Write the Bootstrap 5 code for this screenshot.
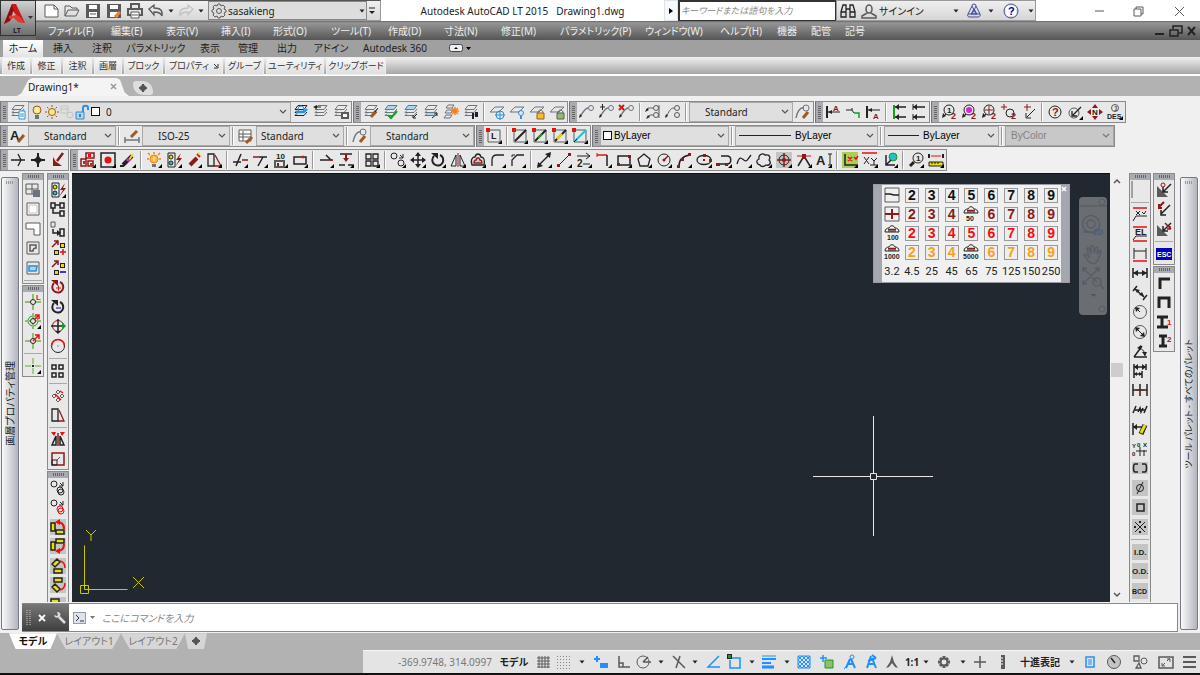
<!DOCTYPE html>
<html lang="ja">
<head>
<meta charset="utf-8">
<meta name="viewport" content="width=device-width, initial-scale=1">
<title>Autodesk AutoCAD LT 2015</title>
<link href="https://cdn.jsdelivr.net/npm/bootstrap@5.3.0/dist/css/bootstrap.min.css" rel="stylesheet">
<style>
:root { --bar: #e8e8e8; --face: #f0f0f0; --edge: #8a8a8a; --canvas: #212830; }
body { font: 10px/16px "Noto Sans", "Noto Sans CJK JP", sans-serif; font-feature-settings: "palt"; color: #222; background: var(--face); }
button, select, input { font: inherit; font-feature-settings: inherit; color: inherit; border: 0; background: none; padding: 0; border-radius: 0; min-width: 0; }
a { color: inherit; text-decoration: none; }
svg { display: block; flex: none; }
select { appearance: none; outline: 0; }
input:focus { outline: 0; }
button { display: flex; align-items: center; justify-content: center; white-space: nowrap; }
.flat { display: contents; }
.fit { min-width: 0; min-height: 0; }

/* title and menus */
.app-head { display: grid; grid-template-columns: 36px 1fr; background: #6a6a6a; }
.app-btn { height: 36px; background: linear-gradient(#d0d0d0, #6f6f6f); border: 1px solid #333; position: relative; align-items: flex-start; justify-content: flex-start; }
.app-btn small { position: absolute; left: 12px; bottom: -1px; font-size: 7px; line-height: 11px; font-weight: 700; }
.title-row { height: 21px; background: #fff; }
.qat { width: 345px; background: linear-gradient(#efefef, #d8d8d8); border: 1px solid #999; border-top-color: #555; border-left: 0; padding-left: 4px; }
.qat .ib { width: 21px; }
.qat .ic { width: 9px; }
.qat .ic .ib, .workspace .ic .ib { width: 9px; }
.workspace { width: 159px; background: #ddd; border: 1px solid #888; height: 19px; margin-left: 3px; }
.workspace > span:first-child .ib { width: 19px; }
.find { width: 158px; border: 2px solid #333; border-width: 2px 1px 1px 2px; background: #fff; padding: 0 1px; font-size: 9px; }
.find::placeholder, .cmd-input::placeholder { color: #888; font-style: italic; opacity: 1; }
.info { width: 200px; background: linear-gradient(#efefef, #d6d6d6); border: 1px solid #999; display: grid; grid-template-columns: 22px 20px 72px 10px 26px 8px 32px 8px; align-items: center; }
.info .ib { width: 100%; }
.win { display: grid; grid-template-columns: 41px 38px 44px; padding-left: 42px; width: 164px; }
.menu-row { height: 19px; background: linear-gradient(#6a6a6a, #959595 10%, #555); color: #eee; display: grid; align-items: center; padding-left: 12px; white-space: nowrap;
  grid-template-columns: 63px 55px 55px 52px 58px 57px 56px 57px 59px 85px 75px 57px 34px 34px 1fr; }

/* ribbon */
.tab-row { height: 17px; background: #a0a0a0; padding-left: 3px; display: grid; grid-template-columns: 40px 40px 38px 70px 38px 38px 40px 48px 80px 50px; }
.tab-row .on { background: linear-gradient(#fff, #e4e4e4); }
.panel-row { height: 19px; background: linear-gradient(#f0f0f0, #a6a6a6); border-bottom: 2px solid #fff; padding-left: 2px; display: grid; gap: 2px; font-size: 9px;
  grid-template-columns: 28px 29px 29px 28px 39px 58px 39px 58px 60px; }
.panel-row button { background: linear-gradient(#f8f8f8, #dedede); border: 1px solid #eee; color: #333; }
.file-row { height: 21px; background: #b2b2b2; padding: 2px 0 0 17px; }
.file-tab { width: 112px; background: #f4f4f4; clip-path: polygon(0 100%, 4% 85%, 10% 15%, 14% 0, 88% 0, 92% 12%, 96% 80%, 100% 100%); padding: 0 12px 0 11px; }
.new-tab { width: 20px; height: 14px; background: #ddd; border-radius: 3px 10px 3px 10px; margin-top: 3px; }

/* toolbars */
.bars { padding: 5px 0 2px; gap: 2px; }
.bar-row { display: flex; gap: 1px; }
.bar { height: 22px; background: var(--bar); border: 1px solid var(--edge); border-left-color: #777; flex: none; }
.grip { width: 7px; flex: none; background: repeating-linear-gradient(#a9abb3 0 1px, transparent 1px 2px) center / 3px 14px no-repeat, linear-gradient(#666 0 0) center / 3px 14px no-repeat, #a9abb3; }
.tool { width: 20px; height: 20px; flex: none; }
.sep { width: 6px; flex: none; margin: 1px 0; background: linear-gradient(90deg, transparent 2px, #999 2px 3px, #fff 3px 4px, transparent 4px); }
.combo { background-color: #dfdfdf; border: 1px solid #a9a9a9; height: 20px; }
.combo select { background: url("data:image/svg+xml,%3Csvg xmlns='http://www.w3.org/2000/svg' width='8' height='6'%3E%3Cpath d='M1 1l3 3 3-3' fill='none' stroke='%23555' stroke-width='1.2'/%3E%3C/svg%3E") no-repeat right 3px center; flex: 1; height: 18px; }
.combo .ib { width: 15px; }
.w1 { width: 263px; } .w2 { width: 104px; } .w3 { width: 88px; } .w4 { width: 129px; } .w5 { width: 143px; } .w6 { width: 115px; } .w7 { width: 109px; }
.w2 select, .w3 select { padding-left: 15px; }
.lay { font: 10px/16px "Liberation Sans", sans-serif; color: #000; }
.swatch { width: 9px; height: 9px; border: 1px solid #111; background: #fff; margin: 0 2px 0 2px; }
.rule-line { height: 1px; background: #222; margin-left: 3px; }
.w5 .rule-line { width: 52px; margin-right: 4px; } .w6 .rule-line { width: 31px; margin-right: 4px; }
.off { background: #c8c8c8; } .off select { opacity: .7; padding-left: 5px; color: #666; }

/* work area */
.side { width: 18px; margin: 4px 3px 3px 1px; border: 1px solid #777a84; border-radius: 2px; background: repeating-linear-gradient(90deg, #999 0 1px, transparent 1px 2px) center 3px / 8px 3px no-repeat, linear-gradient(90deg, #fafafa, #b2b5be); box-shadow: 1px 0 0 #fff; }
.side-r { margin: 4px 2px 3px; font-size: 9px; }
.side span { writing-mode: vertical-rl; text-orientation: sideways; transform: rotate(180deg); white-space: nowrap; }
.gap-a { margin-right: 3px; }
.gap-b { margin-left: 5px; margin-right: 2px; }
.vbar { width: 22px; background: var(--bar); border: 1px solid var(--edge); margin-bottom: 1px; flex: none; }
.vbar.open { border-bottom: 0; margin: 0; flex: 1; overflow: hidden; min-height: 0; }
.vbar .grip { width: auto; height: 6px; background: repeating-linear-gradient(90deg, #a9abb3 0 1px, transparent 1px 2px) center / 12px 3px no-repeat, linear-gradient(#666 0 0) center / 12px 3px no-repeat, #a9abb3; }
.vbar .tool { height: 19px; }
.vbar .tool:nth-child(odd) { height: 20px; }
.vbar .sep { width: auto; height: 5px; margin: 0 1px; background: linear-gradient(transparent 2px, #aaa 2px 3px, transparent 3px); }
.canvas { background: var(--canvas); flex: 1; position: relative; border-top: 1px solid #111; }
.ucs { position: absolute; left: 8px; bottom: 7px; }
.cross { position: absolute; right: 177px; bottom: 66px; }
.scroller { width: 14px; padding: 5px 1px 4px; }
.above { flex: 177; } .below { flex: 212; }
.thumb { height: 14px; background: #cdcdcd; }
.pal { position: absolute; top: 10px; right: 40px; width: 197px; background: var(--face); border: 1px solid #9a9ca5; }
.pal .edge { width: 8px; background: #a4a7b0; }
.pal-grid { flex: 1; display: grid; padding-top: 1px; grid-template-columns: repeat(9, minmax(0, 1fr)); }
.pal-grid button { height: 19px; }
.num { border: 1px solid #999; width: 14px; height: 15px; font: 700 14px/13px "Liberation Sans", sans-serif; text-align: center; background: #eee; }
.pal-grid .size { font: 11px/20px Roboto, sans-serif; height: 20px; }
.c0 { color: #111; } .c1 { color: #8b1a1a; } .c2 { color: #f01010; } .c3 { color: #f7a11a; }
.navpal { position: absolute; right: 3px; top: 23px; width: 28px; height: 118px; border-radius: 4px; background: #6a6d72; }

/* command line and status */
.cmd { height: 30px; background: #fff; border: 1px solid #888; border-left: 0; margin: 1px 0; }
.cmd-grip { width: 47px; background: linear-gradient(#777, #3f3f3f); padding-left: 4px; gap: 6px; }
.cmd-input { flex: 1; padding-left: 5px; }
.layout-row { height: 17px; background: #b2b2b2; padding-left: 9px; }
.layout-row button { height: 16px; background: #d6d6d6; color: #777; width: 64px; clip-path: polygon(0 0, 100% 0, 92% 60%, 86% 100%, 14% 100%, 8% 60%); }
.layout-row .on { width: 48px; background: #fff; color: #111; font-weight: 700; }
.layout-row .plus { width: 22px; }
.status-wrap { background: #b2b2b2; border-bottom: 2px solid #111; height: 26px; }
.status { background: #e4e4e4; border-top: 1px solid #f5f5f5; display: grid; align-items: center;
  grid-template-columns: 133px 36px 21px 20px 17px 22px 23px 18px 16px 19px 14px 22px 21px 13px 22px 13px 22px 23px 23px 20px 22px 18px 10px 26px 12px 22px 24px 50px 14px 22px 26px 26px 25px 22px; }
.coords { color: #777; text-align: right; padding-right: 4px; }
</style>
</head>
<body class="vh-100 d-flex flex-column overflow-hidden">

<header class="app-head">
  <button class="app-btn" type="button" aria-label="アプリケーション"><svg width="34" height="26" viewBox="0 0 34 26"><path d="M11 3l4 0 9 19-6-1-6-5-3 3-6 4z" fill="#c81a1c"/><path d="M11 3L3 23l6-3 4-9z" fill="#8f0d10"/><path d="M8 15l6-2 5 3 5 6-7-1-4-4-5 1z" fill="#e23a34"/><path d="M12 10l3 4-4 1z" fill="#c9b0b0"/><path d="M27 15h5l-2.500 3z" fill="#333"/></svg><small>LT</small></button>
  <div>
    <div class="title-row d-flex">
      <div class="qat d-flex align-items-center">
        <span class="d-flex" data-icons="qnew qopen qsave qsaveas qprint qundo"></span>
        <span class="ic" data-icons="caret"></span><span class="d-flex" data-icons="qredo"></span><span class="ic" data-icons="caret"></span>
        <label class="workspace d-flex align-items-center"><span data-icons="gear"></span><select class="flex-fill" aria-label="ワークスペース"><option>sasakieng</option></select><span class="ic" data-icons="caret"></span></label>
        <span class="ic" data-icons="drop"></span>
      </div>
      <div class="flex-fill d-flex align-items-center justify-content-center gap-2"><span>Autodesk AutoCAD LT 2015</span><span>Drawing1.dwg</span></div>
      <button type="button" class="bg-secondary-subtle border px-1" aria-label="展開"><svg width="4" height="6"><path d="M0 0v6l4-3z"/></svg></button>
      <input class="find" type="text" placeholder="キーワードまたは語句を入力" aria-label="検索">
      <div class="info">
        <span data-icons="binoc"></span><span data-icons="user"></span><a href="#">サインイン</a><span data-icons="caret"></span><span data-icons="a360"></span><span data-icons="caret"></span><span data-icons="help"></span><span data-icons="caret"></span>
      </div>
      <div class="win" data-icons="wmin wmax wclose"></div>
    </div>
    <nav class="menu-row">
      <a href="#">ファイル(F)</a><a href="#">編集(E)</a><a href="#">表示(V)</a><a href="#">挿入(I)</a><a href="#">形式(O)</a><a href="#">ツール(T)</a><a href="#">作成(D)</a><a href="#">寸法(N)</a><a href="#">修正(M)</a><a href="#">パラメトリック(P)</a><a href="#">ウィンドウ(W)</a><a href="#">ヘルプ(H)</a><a href="#">機器</a><a href="#">配管</a>
      <div class="d-flex justify-content-between align-items-center"><a href="#">記号</a><span class="d-flex" data-icons="dmin dmax dclose"></span></div>
    </nav>
  </div>
</header>
<div class="tab-row">
  <button type="button" class="on">ホーム</button><button type="button">挿入</button><button type="button">注釈</button><button type="button">パラメトリック</button><button type="button">表示</button><button type="button">管理</button><button type="button">出力</button><button type="button">アドイン</button><button type="button">Autodesk 360</button>
  <button type="button" aria-label="リボンを最小化"><svg width="22" height="10"><rect x=".5" y="1.500" width="13" height="7" rx="2" fill="#eee" stroke="#445"/><path d="M5 6l2-2 2 2zM17 4h5l-2.500 3z"/></svg></button>
</div>
<div class="panel-row">
  <button type="button">作成</button><button type="button">修正</button><button type="button">注釈</button><button type="button">画層</button><button type="button">ブロック</button><button type="button" class="gap-1">プロパティ<svg width="6" height="6"><path d="M1 1l3 3M5 1v4H1" fill="none" stroke="#333"/></svg></button><button type="button">グループ</button><button type="button">ユーティリティ</button><button type="button">クリップボード</button>
</div>
<div class="file-row d-flex">
  <div class="file-tab d-flex align-items-center justify-content-between"><a href="#">Drawing1*</a><svg width="7" height="7"><path d="M1 1l5 5M6 1L1 6" stroke="#999" stroke-width="1.500"/></svg></div>
  <button type="button" class="new-tab ms-1" aria-label="新規タブ"><svg width="8" height="8"><circle cx="4" cy="4" r="3" fill="#555"/><path d="M4 0v8M0 4h8" stroke="#555" stroke-width="2"/></svg></button>
</div>

<div class="bars d-flex flex-column">
  <div class="bar-row">
    <div class="bar d-flex"><i class="grip"></i><span class="d-flex" data-tools="layprop"></span>
      <label class="combo w1 d-flex align-items-center"><span class="d-flex" data-icons="bulb sun vpf lock"></span><i class="swatch"></i><select class="ps-1" aria-label="画層"><option>0</option></select></label>
      <span class="d-flex" data-tools="laycur layprev laystate"></span></div>
    <div class="bar d-flex"><i class="grip"></i><span class="d-flex" data-tools="laymatch laycheck layiso layuniso layfrz laywalk | lay0frz lay0off lay0lock lay0unlock"></span></div>
    <div class="bar d-flex"><i class="grip"></i><span class="d-flex" data-tools="mlead mladd mlrem | mlalign mlcol |"></span>
      <label class="combo w2 d-flex"><select aria-label="マルチ引出線スタイル"><option>Standard</option></select></label><span class="d-flex" data-tools="mlstyle"></span></div>
    <div class="bar d-flex"><i class="grip"></i><span class="d-flex" data-tools="dimA dimB dimC | dimD dimE"></span></div>
    <div class="bar d-flex"><i class="grip"></i><span class="d-flex" data-tools="bal1 bal2 bal3 bal4 bal5 | qmark check. north des."></span></div>
  </div>
  <div class="bar-row">
    <div class="bar d-flex"><i class="grip"></i><span class="d-flex" data-tools="txtstyle"></span><label class="combo w3 d-flex"><select aria-label="文字スタイル"><option>Standard</option></select></label>
      <span class="d-flex" data-tools="| dimstyle"></span><label class="combo w3 d-flex"><select aria-label="寸法スタイル"><option>ISO-25</option></select></label>
      <span class="d-flex" data-tools="| tabstyle"></span><label class="combo w3 d-flex"><select class="ps-1" aria-label="表スタイル"><option>Standard</option></select></label>
      <span class="d-flex" data-tools="| mlstyle"></span><label class="combo w2 d-flex"><select aria-label="引出線スタイル"><option>Standard</option></select></label></div>
    <div class="bar d-flex"><i class="grip"></i><span class="d-flex" data-tools="boxL. | boxK. boxG. boxY. boxC."></span></div>
    <div class="bar d-flex lay"><i class="grip"></i><label class="combo w4 d-flex align-items-center"><i class="swatch"></i><select aria-label="色"><option>ByLayer</option></select></label><i class="sep"></i>
      <label class="combo w5 d-flex align-items-center"><i class="rule-line"></i><select aria-label="線種"><option>ByLayer</option></select></label><i class="sep"></i>
      <label class="combo w6 d-flex align-items-center"><i class="rule-line"></i><select aria-label="線の太さ"><option>ByLayer</option></select></label><i class="sep"></i>
      <label class="combo w7 off d-flex"><select disabled aria-label="印刷スタイル"><option>ByColor</option></select></label></div>
  </div>
  <div class="bar-row">
    <div class="bar d-flex"><i class="grip"></i><span class="d-flex" data-tools="arrowR star4 arrowDL"></span></div>
    <div class="bar d-flex"><i class="grip"></i><span class="d-flex" data-tools="blocks. point. eraser. | bulbO. dyn. wand. stretch. | trim. extend. arr10. rect1. | join. brk. | array. | copy. move. rotate. mirror. offset. fillet. chamfer. | xline. line. pline2. pl. rect. polygon. circle. arc. ellipse. earc. spline. cloud. hatch. divide. mtext. | ucs. xref. globe. | zoom1. ruler."></span></div>
  </div>
</div>

<div class="flex-fill fit d-flex">
  <aside class="side d-flex flex-column align-items-center justify-content-center"><span>画層プロパティ管理</span></aside>
  <div class="flex-fill fit d-flex flex-column">
    <main class="d-flex flex-fill fit">
      <div class="d-flex flex-column gap-a">
        <div class="vbar"><i class="grip d-block"></i><span data-tools="vp1 vp2 vp3 vp4 vp5 |"></span></div>
        <div class="vbar"><i class="grip d-block"></i><span data-tools="snapL snapG. snapH | snapP."></span></div>
      </div>
      <div class="d-flex flex-column gap-a">
        <div class="vbar"><i class="grip d-block"></i><span data-tools="dyn. grp1 grp2 adds subs rotR rotK rot4 circR | array4 | diag trap | mirR scl"></span></div>
        <div class="vbar open"><i class="grip d-block"></i><span data-tools="cpK cpR y1 y2 y3 y4 y5"></span></div>
      </div>
      <div class="canvas">
        <svg class="ucs" width="68" height="66" viewBox="0 0 68 66" fill="none" stroke="#c8c800" stroke-width="1"><path d="M.5 56.500h8v8h-8zM4.500 60.500v-44M4.500 60.500h43M6 1l5 5 5-5M11 6v6M53 48l11 11M64 48l-11 11"/></svg>
        <svg class="cross" width="120" height="120" viewBox="0 0 120 120" fill="none" stroke="#e8e8e8"><path d="M60.500 0v57M60.500 64v56M0 60.500h57M64 60.500h56M57.500 57.500h6v6h-6z"/></svg>
        <section class="pal d-flex"><i class="edge"></i><div class="pal-grid" id="palette"></div><i class="edge"><svg width="6" height="8"><path d="M1 2l4 4M5 2L1 6" stroke="#fff" stroke-width="1.500"/></svg></i></section>
        <svg class="navpal" viewBox="0 0 28 118" fill="none" stroke="#555e68" stroke-width="1.300"><path d="M0 9h28" stroke="#5c5f64"/><circle cx="23" cy="5" r="3" stroke-width="1"/><circle cx="23" cy="112" r="3" stroke-width="1"/><circle cx="12" cy="27" r="8.500"/><circle cx="12" cy="27" r="4"/><path d="M4 35h9"/><text x="14" y="38" font-size="8" font-weight="700" fill="#4a6078" stroke="none">2D</text><path d="M10 65l-5-7c1-2 3 0 5 2l-2-9c2-1 3 1 4 6V49c2-1 3 0 3 7l2-6c2 0 2 2 1 7l3-4c2 1 1 3-1 7-2 7-6 8-10 5zM4 71l14 14M20 71L4 87M4 75v-4h4M16 71h4v4M4 83v4h4"/><circle cx="18" cy="85" r="4"/><path d="M21 88l4 4"/><path d="M12 97h5l-2.500 3z" fill="#50555c" stroke="none"/></svg>
      </div>
      <div class="scroller d-flex flex-column"><svg width="12" height="6"><path d="M3 5l3-3 3 3" fill="none" stroke="#555" stroke-width="1.500"/></svg><div class="above"></div><div class="thumb"></div><div class="below"></div><svg width="12" height="6"><path d="M3 1l3 3 3-3" fill="none" stroke="#555" stroke-width="1.500"/></svg></div>
      <div class="d-flex flex-column gap-b">
        <div class="vbar open"><i class="grip d-block"></i><span data-tools="vline | xyR elR dimR dimH dimAl dimRad dimDia dimAng dimBase dimCon dimJog dimEd dimOrd gBr gPhi gBox gX | gID gOD gBCD"></span></div>
      </div>
      <div class="d-flex flex-column gap-a">
        <div class="vbar"><i class="grip d-block"></i><span data-tools="wld1 wld2 wld3 | esc"></span></div>
        <div class="vbar"><i class="grip d-block"></i><span data-tools="stL stC stI1 stI2"></span></div>
      </div>
    </main>
    <div class="cmd d-flex">
      <div class="cmd-grip d-flex align-items-center"><svg width="5" height="16"><path d="M1 0v16M4 0v16" stroke="#ccc" stroke-dasharray="1 1"/></svg><svg width="10" height="10"><path d="M2 2l6 6M8 2L2 8" stroke="#fff" stroke-width="1.800"/></svg><svg width="14" height="14" viewBox="0 0 14 14"><path d="M6 6l6 6" stroke="#ddd" stroke-width="2.500"/><path d="M1 4l3 1 1-1-1-3c3 0 4 2 3 4s-5 3-6-1z" fill="#ddd"/></svg></div>
      <div class="d-flex align-items-center ps-1"><svg width="24" height="12" viewBox="0 0 24 12"><rect x=".5" y=".5" width="12" height="11" fill="#dde3ea" stroke="#99a"/><path d="M3 3l3 3-3 3M7 9h4" fill="none" stroke="#334"/><path d="M17 4h5l-2.500 3z" fill="#777"/></svg></div>
      <input class="cmd-input" type="text" placeholder="ここにコマンドを入力" aria-label="コマンド">
    </div>
  </div>
  <aside class="side side-r d-flex flex-column align-items-center justify-content-center"><span>ツール パレット - すべてのパレット</span></aside>
</div>

<div class="layout-row d-flex"><button type="button" class="on">モデル</button><button type="button">レイアウト1</button><button type="button">レイアウト2</button><button type="button" class="plus" aria-label="新規レイアウト"><svg width="8" height="8"><circle cx="4" cy="4" r="3" fill="#555"/><path d="M4 0v8M0 4h8" stroke="#555" stroke-width="2"/></svg></button></div>
<footer class="status-wrap d-flex justify-content-end"><div class="status">
  <span class="coords">-369.9748, 314.0997</span><button type="button" class="fw-bold">モデル</button>
  <span class="flat" data-icons="sgrid sdots caret sdyn sortho spolar caret siso caret sotrk sosnap caret slw caret stran scyc sann1 sann2 sann3"></span>
  <button type="button" class="fw-bold">1:1</button><span class="flat" data-icons="caret sgear caret splus sruler"></span>
  <button type="button" class="fw-bold">十進表記</button><span class="flat" data-icons="caret sprop sperf siso2 sfull smenu"></span>
</div></footer>

<script>
// Icon strokes on a 16 x 16 grid. Each part is "<colour><width> path"; an upper-case
// colour fills. "o:" and "O:" draw circles, "t:" sets a short label.
const C = {k:'#222',r:'#e81010',m:'#8b1a1a',g:'#1a9a2a',y:'#e8e000',b:'#2f8fd8',s:'#6c757d',w:'#fff',c:'#22c0d0',o:'#f08020',p:'#e020e0',n:'#a05a20',l:'#c4c4c4',d:'#0000b8',e:'#444c9a',a:'#5a5a5a',z:'#1e90ff',u:'#a8cf5a',i:'#a9d4f2',v:'#f0c030',f:'#f8e88a',h:'#8fbf6a'};
const lay = 's M5 1.500h9l-3 4H2zM4 6.500l-2 2h9l3-3.500M4 9.500l-2 2h9l3-3.500';
const lay1 = 's M6 3h9l-5 5H1z';
const brush = 'n3 M8 13l5-6|k M12 8l3-4';
const ml = 'o:s 12 4 2.500|s1.300 M9 4C6 4 4 8 1 13|K M0 14l1-4 2 2z';
const ball = 'o:k 8 6 5|K M1 14l1-5 3 3z|k M2 13l3-3';
const box = 'a M2 2h12v12H2z|R M0 0h4v4H0z';
const sun = 'O:f 8 8 3.500|o:n 8 8 3.500|n M8 1v2M8 13v2M1 8h2M13 8h2M3 3l1.500 1.500M11.500 11.500L13 13M13 3l-1.500 1.500M3 13l1.500-1.500';
const bulb = 'O:f 8 6 4|o:n 8 6 4|S M6 11h4v4H6z|w M8 4v4';
const snap = 'h2 M8 0v5M8 11v5M0 8h5M11 8h5|o:k 8 8 2.500';
const gray = 'L M0 0h16v16H0z';
const rot = 'k2 M4 4a5.500 5.500 0 1 0 6-1|K M1 1h7v6z';
const cloudR = 'O:l 8 8 3|k1.300 M2 13C0 7 3 5 5 5c1-4 5-4 6 0 3 0 4 3 3 8z|m1.300 M4 11c0-3 2-3 2-3 1-3 3-3 4 0 0 0 2 0 2 3z';
const arch = 'k M1 7c0-3 2-4 4-4 1-3 5-3 6 0 2 0 4 1 4 4zM4 6h8|m1.500 M4 4.500h8';
const cp = 'k M10 3l3 3M13 2v4H9|o:k 4 4 3';
const I = {
 caret:'K M5.500 6.500h5l-2.500 3z', drop:'k M5 5h6|K M5 8h6l-3 3z',
 qnew:'W M2 2h9l4 4v8H2z|a M2 2h9l4 4v8H2zM11 2v4h4', qopen:'a M1 13V3h5l2 2h5v2M1 13l3-6h11l-3 6z', qsave:'A M1 1h14v14H1z|W M4 2h8v4H4zM4 9h8v5H4z|a M5 11h6', qsaveas:'A M1 1h14v14H1z|W M4 2h8v4H4zM4 9h8v5H4z|o3 M9 14l5-5',
 qprint:'a2 M4 5V1h8v4M1 6h14v6H1z|W M4 9h8v6H4z|a M4 9h8v6H4zM5 12h6', qundo:'a1.300 M1 6l5-4v3c6 0 9 2 8 8-1-3-3-4-8-4v3z', qredo:'l1.300 M15 6l-5-4v3c-6 0-9 2-8 8 1-3 3-4 8-4v3z',
 gear:'o:a 8 8 2.500|a M7 1h2l1 2 2-1 2 2-1 2 2 1v2l-2 1 1 2-2 2-2-1-1 2H7l-1-2-2 1-2-2 1-2-2-1V7l2-1-1-2 2-2 2 1z',
 binoc:'k1.300 M1 9l2-7h3v12H1zM15 9l-2-7h-3v12h5zM6 6h4M1 9h5M10 9h5', user:'a1.500 M5 6a3 4 0 1 1 6 0c0 3-1 4-3 4S5 9 5 6zM6 10l-5 3v2h14v-2l-5-3', a360:'e M6 3a2 2 0 1 1 4 0l4 8c1 2-1 3-2 3H4c-2 0-3-1-2-3zM8 6l3 5H5zM6 3l4 8M10 3L6 11M2 11h12', help:'W M3 3h10v10H3z|o:e 8 8 7|t:d 5 12 11 ?',
 wmin:'a M4 8h9', wmax:'a M4 6h7v7H4zM6 6V4h7v7h-2', wclose:'a M4 4l9 9M13 4l-9 9', dmin:'k2 M3 11h9', dmax:'k1.500 M2 7h8v6H2zM5 6V3h9v7h-3', dclose:'k2 M4 4l7 8M11 4l-7 8',
 layprop:lay+'|W M9 7h6v8H9z|b M9 7h6v8H9zM10 10h4M10 12h4', bulb, sun, vpf:'l M2 2h7v7H2zM2 5h7|o:l 11 11 3', lock:'I M2 8h8v7H2z|b M2 8h8v7H2z|b2 M9 8V4c0-3 5-3 5 0v2|k M6 10v3',
 laycur:'I M5 6h9l-3 4H2z|'+lay.replace('s','k')+'|b2 M3 8h8l3-3|o:b 8 5 3', layprev:lay+'|K M0 3l4-2v4z|k M3 3h5', laystate:lay+'|W M9 9h6v5H9z|a2 M9 9h6v5H9z',
 laymatch:lay+'|'+brush, laycheck:'I M5 1h9l-3 4H2z|'+lay+'|g2 M5 11l3 3 6-7', layiso:'I M5 1h9l-3 4H2z|'+lay+'|k M10 14l4-4M10 11v3h3', layuniso:'I M4 9h9l-3 3H2z|'+lay+'|k M9 14l5-4M11 9h3v3', layfrz:'s M5 1h6l-2 3H3zM4 6h6l-2 3H2zM3 11h6l-2 3H1z|o1.500 M12 3v8M8 7h8M9 4l6 6M15 4l-6 6', laywalk:lay+'|K M9 9h2v6H9zM12 8h3v5h-3z',
 lay0frz:lay1+'|o:b 11 11 4|b M11 6v10M6 11h10', lay0off:lay1+'|o:b 12 9 2.500|b2 M12 12v3', lay0lock:lay1+'|V M8 9h7v6H8z|n M9 9c0-4 5-4 5 0M8 9h7v6H8z', lay0unlock:lay1+'|H M8 9h7v6H8z|a M9 9c0-4 5-4 5 0M8 9h7v6H8z',
 mlead:ml, mladd:ml+'|k M1 3h5M3.500 0v6', mlrem:ml+'|r2 M0 1l5 5M5 1L0 6', mlalign:'o:a 11 4 2.500|o:a 11 11 2.500|a M14 1v13M8 4H3l-2 3M8 11H5l-3 3|K M0 8l2-4 2 2zM1 15l2-4 2 2z', mlcol:'o:a 12 4 2.500|o:a 12 11 2.500|a M9 4C5 4 4 8 1 13|K M0 14l1-4 2 2z', mlstyle:'o:s 11 4 3|s1.500 M1 14C2 8 5 3 9 4|n3 M8 14l5-6',
 dimA:'k2 M2 2v12|k M3 8h12|K M3 8l4-2v4z|t:m 8 7 8 A', dimB:'k M1 6h6v-2M7 6l2 3|g1.500 M9 9h5v5', dimC:'k2 M2 2v12|k M3 6h12|K M3 6l4-2v4z|t:m 8 15 8 A', dimD:'g2 M3 1v14|k1.500 M4 3h11M4 13h11|K M4 3l4-3v6zM4 13l4-3v6z', dimE:'k1.500 M2 3h12M2 13h12|K M2 3l4-3v6zM2 13l4-3v6z|k M2 0v6M2 10v6',
 bal1:ball+'|t:k 6 9 8 1|t:m 10 15 9 2', bal2:ball+'|O:p 8 6 3|t:m 10 15 9 2', bal3:ball+'|m M4 6h8M8 2v8|t:m 10 15 9 2', bal4:'m M0 3h6M3 0v6|o:k 9 9 4|t:m 10 15 9 2', bal5:'m M3 3h7M6 0v7|k M14 5l-8 8M5 9v5h5',
 qmark:'o:k 8 8 6|t:m 5 12 11 ?', check:'o:a 7 9 5|k1.300 M14 3l-8 8M5 7v5h5', north:'t:k 5 11 8 N|M M8 0l3 4H5zM8 16l3-4H5zM0 8l4-3v6zM16 8l-4-3v6z', des:'o:a 8 4 3.500|t:a 7 7 7 1|t:k 0 15 7 DES',
 txtstyle:'t:k 0 12 13 A|n3 M8 14l6-7', dimstyle:'s1.500 M1 9v6M15 9v6M1 12h14|n3 M7 9l6-6', tabstyle:'W M1 2h12v11H1z|a M1 2h12v11H1zM1 6h12M1 9h12M5 3v10|n3 M8 15l6-6',
 boxL:box+'|t:k 5 11 9 L', boxK:box+'|k2 M3 13L14 2', boxG:box+'|k2 M3 13L14 2|g2 M6 10l4-4', boxY:box+'|k2 M3 13L14 2|y2 M5 11l5-5', boxC:box+'|c2 M3 13L14 2|k M2 14l3-3',
 arrowR:'k1.300 M1 8h14M8 2l3 6-3 6', star4:'K M8 2l2 4 4 2-4 2-2 4-2-4-4-2 4-2z|k2 M8 1v14M1 8h14', arrowDL:'m2.500 M13 1L7 9|M M3 5v9h9l-4-3-2-1z',
 blocks:'m1.500 M6 1h8v5H6zM1 7h5v7H1zM8 9h5v5H8z|R M8 2h3v3H8zM3 9h2v3H3zM10 11h2v2h-2z', point:'k1.500 M1 1h14v14H1z|O:r 8 8 3.500', eraser:'k4 M3 13l9-9|y2 M9 8l4-6|p3 M7 9l2-2|k2 M0 14h4', bulbO:'o1.500 M8 0v2M1 7h2M13 7h2M2 1l2 2M14 1l-2 2|O:v 8 7 4|o:o 8 7 4|S M6 12h4v3H6z|w M8 5v4',
 dyn:'k M2 1h7v14H2z|O:y 5 5 2|O:c 5 11 2|o:k 5 5 2|o:k 5 11 2|M M15 1l-5 7h3l-4 7 7-9h-3z', wand:'m4 M4 13l7-7|r2 M11 2l3 3|y M13 0v3M15 4h1', stretch:'k1.300 M2 2h6v12H2z|m1.300 M9 3l6 11H8', trim:'k1.500 M1 10h8M4 14L9 2|m1.500 M10 8h6', extend:'m1.500 M1 5h6|k1.500 M7 5h8M6 14l5-9', arr10:'t:k 4 7 8 10|a2 M3 9h9v6H3z|m2 M6 11v3', rect1:'k1.500 M2 5h12v7H2z|o:r 11 5 1', join:'k1.500 M2 8h13M8 3l5 5|r M12 8h3', brk:'k1.500 M2 2h12M1 13h6M10 13h5|M M5 6h6l-3 4z|m2 M8 2v5',
 array:'k1.300 M2 2h5v5H2zM9 2h5v5H9zM2 9h5v5H2zM9 9h5v5H9z', copy:cp+'|o:k 11 11 3', move:'k1.500 M8 1v14M1 8h14|K M8 0l3 4H5zM8 16l3-4H5zM0 8l4-3v6zM16 8l-4-3v6z', rotate:rot, mirror:'k M6 3v11H1zM10 3v11h5z|m M8 1v14', offset:cloudR, fillet:'k1.300 M2 14V8c0-3 2-5 5-5h7', chamfer:'k1.300 M2 14V8l5-5h7|k M2 5V3h3',
 xline:'k1.500 M2 14L14 2|K M15 0l-1 6-5-4zM1 16l1-6 5 4z', line:'k M3 13L13 3|M M1 12h3v3H1zM12 1h3v3h-3z', pline2:'k M1 4h13M10 1l4 3-4 3|t:k 1 15 10 2|k M7 12h7', pl:'r1.500 M1 3h10|k1.500 M11 3v11|r M1 1v4', rect:'k1.500 M2 4h12v9H2z|M M1 11h3v3H1zM12 3h3v3h-3z', polygon:'k1.300 M8 2l6 5-2 7H4L2 7z', circle:'o:k 8 8 6|m1.500 M8 8l4-4|O:m 8 8 1.500', arc:'k1.500 M3 14C3 8 7 4 14 3|M M1 13h3v3H1zM5 6h3v3H5zM12 1h3v3h-3z', ellipse:'k1.300 M1 8c0-6 14-6 14 0s-14 6-14 0|M M7 7h2v2H7zM13 7h3v3h-3zM7 2h3v3H7z', earc:'k1.500 M5 4h6c5 0 5 8 0 8H2|M M0 11h4v3H0zM9 11h3v3H9z', spline:'k1.300 M1 12C5-2 8 14 12 7l3-4', cloud:'k1.300 M4 13c-4-1-4-5-1-6-1-5 4-6 6-4 4-1 6 2 4 5 3 3 0 6-3 5-2 2-5 2-6 0z', hatch:gray+'|o:k 8 8 5|m1.500 M8 1v14M1 8h14|O:m 8 8 2', divide:'r M1 4h14|k1.500 M2 14l6-10 6 10|M M6 2h4v5H6z', mtext:'t:k 0 13 13 A|k M12 2h4M14 2v11M12 13h4',
 ucs:'U M0 0h16v16H0z|k1.500 M3 2v11h12|r1.500 M6 5l4 4M10 5l-4 4M12 5l2 2 2-3', xref:'r1.500 M0 1h15|k M2 5l5 7M7 5l-5 7M9 6l3 3 3-3M12 9v4M8 13h7', globe:'O:c 11 5 4|o:g 11 5 4|k1.500 M4 3v10h9M4 13l5-5', zoom1:'o:k 10 6 5|k3 M2 14l4-4|t:k 8 9 8 1', ruler:'r M3 4h10|k2 M1 2v4M15 2v4|Y M1 10h14v4H1z|k M1 10h14v4H1zM4 10v2M7 10v2M10 10v2',
 vp1:'a M1 2h12v10H1zM7 2v10M1 7h12|S M8 8h7v7H8z', vp2:'W M2 2h12v12H2z|a M2 2h12v12H2z|l M4 4h8v8H4z', vp3:'W M1 2h14v12H9V8H1z|a M1 2h14v12H9V8H1z', vp4:'a M2 2h12v12H2z|a1.500 M5 5h6v3c-3 0-3 3-3 3H5z', vp5:'a M2 2h12v12H2z|I M4 5h9l-1 6H3z|b1.500 M4 6h8l-1 5H4z',
 snapL:snap+'|t:r 11 6 8 L', snapG:'o:g 8 8 5|'+snap+'|r1.500 M9 7l5-5M10 2h4v4', snapH:snap+'|r1.500 M8 8l6-6M10 2h4v4', snapP:'h1.500 M8 0v6M8 10v6M0 8h6M10 8h6|K M7 7h2v2H7z',
 grp1:'k1.500 M1 2h4v5H1zM10 2h4v5h-4zM10 10h4v5h-4zM5 4h5M3 7v5h7', grp2:'a M1 1h4v5H1z|k1.500 M3 8v4h7M10 8h4v7h-4z|K M7 9l4 3-4 3z', adds:'m1.500 M2 7l6-6M4 1h4v4|K M10 3h5v5h-5zM4 10h5v5H4z|Y M11 4h3v3h-3zM5 11h3v3H5z|r1.500 M10 12h6M13 9v6', subs:'m1.500 M2 7l6-6M4 1h4v4|K M10 3h5v5h-5zM4 10h5v5H4z|Y M11 4h3v3h-3zM5 11h3v3H5z|d1.500 M10 12h6',
 rotR:rot.replace(/k/g,'m').replace(/K/g,'M')+'|r M6 9h5M8.500 6.500v5', rotK:rot+'|d M6 9h5', rot4:'o:m 8 8 5.500|k1.500 M8 1v14M1 8h13|G M16 8l-4-4v8z|K M8 16l3-3H5z', circR:'o:k 8 8 6.500|r1.500 M1.500 8a6.500 6.500 0 0 1 13 0|M M7.500 7.500h1v1h-1z', array4:'k1.500 M2 2h4v4H2zM9 2h4v4H9zM2 10h4v4H2zM9 10h4v4H9z', diag:'a M8 2l2 2-2 2-2-2zM4 6l2 2-2 2-2-2zM12 6l2 2-2 2-2-2zM8 10l2 2-2 2-2-2z|r1.500 M5 6l6 6M10 3l3 2', trap:'k1.300 M2 2h6v12H2z|m1.300 M9 3l5 11H8', mirR:'k1.500 M6 5v9H2zM10 5v9h4z|R M1 1h5L4 5zM15 1h-5l2 4z|m1.500 M8 2v13', scl:'m1.500 M2 2h12v12H2z|k M2 9h5v5H2z|a M7 9l3-3',
 cpK:cp+'|o:k 11 12 3|o:k 10 10 3', cpR:cp+'|o:r 11 12 3|o:r 10 10 3', y1:gray+'|Y M1 4h4v8H1zM6 11h8v4H6z|k1.500 M1 4h4v8H1zM6 11h8v4H6z|r2 M7 3c5 0 7 3 7 7|R M5 3l5-3v6z', y2:gray+'|Y M1 4h4v8H1zM6 1h8v4H6z|k1.500 M1 4h4v8H1zM6 1h8v4H6z|r2 M7 13c5 0 7-3 7-7|R M5 13l5-3v6z', y3:gray+'|Y M2 6l5-5 3 3-5 5zM4 11h8v4H4z|k1.500 M2 6l5-5 3 3-5 5zM4 11h8v4H4z|r1.500 M10 3c4 1 5 3 5 7', y4:gray+'|Y M2 10l5 5 3-3-5-5zM4 1h8v4H4z|k1.500 M2 10l5 5 3-3-5-5zM4 1h8v4H4z|r1.500 M10 13c4-1 5-3 5-7', y5:gray+'|Y M1 2h8v4H1z|k1.500 M1 2h8v4H1z',
 vline:'a M0 -1v17', xyR:'r1.500 M1 1h14|k M1 14l3-5h11M4 4l4 4M8 4l-4 4M10 5l2 2 2-3', elR:'r1.500 M1 1h14M1 15h14|t:k 3 9 9 EL|k M1 14l3-4h11', dimR:'k M2 2v11M14 2v11M2 5h12|r1.500 M1 15h14', dimH:'k1.500 M1 3v10M15 3v10M1 8h14|K M1 8l5-3v6zM15 8l-5-3v6z', dimAl:'k1.500 M3 4l9 8M1 6l4-5M11 15l4-5|K M3 4l5 1-3 3zM12 11l-5-1 3-3z', dimRad:'o:a 8 8 6.500|k M4 4l4 4|K M3 3l5 1-4 4z', dimDia:'o:a 8 8 6.500|K M3 3l5 1-4 4zM13 13l-5-1 4-4z|k M4 4l8 8', dimAng:'k1.500 M2 14h13M2 14l8-11|k M7 5c4 1 6 4 6 8|K M5 5l4-3v5zM13 13l-3-4h5z',
 dimBase:'k1.500 M2 1v14M14 1v6M10 8v7M2 4h12M2 11h8|K M2 4l4-3v6zM14 4l-4-3v6zM2 11l3-2v4zM10 11L7 9v4z', dimCon:'k1.500 M1 2v12M8 2v12M15 2v12M1 8h14|m M4 8h8', dimJog:'k1.500 M1 11l3-7M12 11l3-7M3 8h10|k1.500 M6 10l2-4 1 4 2-4', dimEd:'k1.500 M1 2v12M1 6h9|K M1 6l4-3v6z|k5 M9 13l4-9|y3 M9 12l4-8', dimOrd:'t:k 0 7 6 Y|t:k 5 6 6 0|t:k 11 6 6 X|k M4 10h11M8 6v9M12 9v6|t:k 0 15 6 0', gBr:'L M0 2h16v12H0z|k1.500 M6 4H3C1 4 1 12 3 12h3M10 4h3c2 0 2 8 0 8h-3', gPhi:gray+'|o:k 8 8 3.500|k M5 14l6-12', gBox:gray+'|k1.500 M5 5h7v7H5z', gX:gray+'|k M3 3l10 10M13 3L3 13|K M7 2h2v2H7zM7 12h2v2H7zM2 7h2v2H2zM12 7h2v2h-2z', gID:gray+'|t:k 2 11 8 I.D.', gOD:gray+'|t:k 0 11 8 O.D.', gBCD:gray+'|t:k 0 11 7 BCD',
 wld1:'A M1 4l11 11H1z|k1.500 M15 2L7 10M7 5v5h5|o:m 7 3 2', wld2:'k1.500 M14 4l-9 9M5 9v5h5|m2 M3 6l5-5M3 3v4h3', wld3:'A M1 4l11 11H1z|k1.500 M15 2L7 10M7 5v5h5|m1.500 M9 2l6 6M14 5v3h-3', esc:'D M0 2h16v12H0z|t:w 1 11 7 ESC', stL:'k3 M4 14V4h10', stC:'k3 M3 14V4h10v10', stI1:'k3 M1 3h11M1 13h11M6 3v10|t:r 11 11 8 1', stI2:'k3 M3 3h8M3 13h8M7 3v10|t:m 11 9 8 2',
 sgrid:'a M4 2v12M7 2v12M10 2v12M13 2v12M2 4h13M2 7h13M2 10h13M2 13h13', sdots:'dot', sdyn:'z2 M1 5h6M4 2v6|Z M7 9h8v5H7z', sortho:'a1.500 M3 2v11h11M3 9h4v4', spolar:'o:a 7 8 6|a1.500 M7 8h8M7 8l5-5', siso:'a1.500 M2 2l12 12M9 2L5 14', sotrk:'z1.500 M14 2L3 13h12', sosnap:'z1.500 M5 4h8v10H3V6|K M0 0h5v5H0z|G M1 1h3v3H1z', slw:'z1 M1 2h14|z2 M1 5h14|z2 M1 9h9|z3 M1 13h12', stran:'z1 M2 2h12v12H2zM2 6l4-4M2 10l8-8M2 14L14 2M6 14l8-8M10 14l4-4M2 10l4 4M2 6l8 8M2 2l12 12M6 2l8 8M10 2l4 4', scyc:'H M6 6h8v8H6z|g M6 6h8v8H6z|z1.500 M1 4h7M4 1v7',
 sann1:'z2 M8 5L4 14M9 5l4 9M5 10h6|o:z 10 3 2|z M2 15L8 8', sann2:'z2 M8 2L4 14M9 4l4 10M5 10h6|z2 M9 1l4 3M13 4l-8 3', sann3:'A M8 1l2 7 4 6-3-1-3-4-3 4-3 1 4-6z', sgear:'o:a 8 8 3|a3 M8 2v3M8 11v3M2 8h3M11 8h3M4 4l2 2M10 10l2 2M12 4l-2 2M4 12l2-2', splus:'a1.500 M8 2v12M2 8h12', sruler:'A M6 1h4v14H6z|w M6 4h2M6 7h2M6 10h2', sprop:'z1.500 M4 3h8v10H4z|z M6 6h4M6 8h4M6 10h4', sperf:'O:l 8 8 6.500|o:a 8 8 6.500|k1.500 M5 4l4 5', siso2:'a1.300 M2 2h5v5H2z|o:a 12 7 3|a1.300 M4 14l3-5 2 5z', sfull:'a1.500 M1 3h14v11H1z|a M9 7l3-3M9 5h3v3M7 9l-3 3M4 9v3h3', smenu:'a1.800 M2 3h13M2 8h13M2 13h13',
 minus:'a M1 1h14v14H1z|k1.500 M1 7h5l4 1h5', plusP:'a M1 1h14v14H1z|m2 M1 8h14M8 3v10', tag:arch
};
function draw(name, flyout) {
  let out = '';
  for (const part of name.split('|')) {
    if (part === 'dot') { out += '<path d="M2.500 2v13M5.500 2v13M8.500 2v13M11.500 2v13M14.500 2v13" stroke="#888" stroke-dasharray="1 2" fill="none"/>'; continue; }
    const [h, ...rest] = part.split(' ');
    const pair = h.split(':'), col = C[(pair[1] || h[0]).toLowerCase()];
    if (pair[0] === 't') out += `<text x="${rest[0]}" y="${rest[1]}" font-size="${rest[2]}" font-weight="700" font-family="Liberation Sans, sans-serif" fill="${col}">${rest.slice(3).join(' ')}</text>`;
    else if (pair[1]) out += `<circle cx="${rest[0]}" cy="${rest[1]}" r="${rest[2]}" ${pair[0] === 'O' ? `fill="${col}"` : `fill="none" stroke="${col}"`}/>`;
    else if (h[0] < 'a') out += `<path d="${rest.join(' ')}" fill="${col}"/>`;
    else out += `<path d="${rest.join(' ')}" fill="none" stroke="${col}" stroke-width="${h.slice(1) || 1}"/>`;
  }
  if (flyout) out += '<path d="M16 12v4h-4z" fill="#000"/>';
  return `<svg width="16" height="16" viewBox="0 0 16 16" overflow="visible">${out}</svg>`;
}
const button = (n, cls) => `<button type="button" class="${cls}" aria-label="${n.replace('.', '')}">${draw(I[n.replace('.', '')], n.endsWith('.'))}</button>`;
document.querySelectorAll('[data-tools]').forEach(el => {
  el.innerHTML = el.dataset.tools.split(' ').map(n => n === '|' ? '<i class="sep d-block"></i>' : button(n, 'tool')).join('');
});
document.querySelectorAll('[data-icons]').forEach(el => {
  el.innerHTML = el.dataset.icons.split(' ').map(n => button(n, 'ib')).join('');
});
// Offset palette: one row per colour, with the special cells of each row.
const special = {'0-1': ['minus'], '1-1': ['plusP'], '1-5': ['tag', 50], '2-1': ['tag', 100], '3-1': ['tag', 1000], '3-5': ['tag', 5000]};
let cells = '';
for (let r = 0; r < 4; r++) for (let n = 1; n <= 9; n++) {
  const s = special[r + '-' + n];
  cells += `<button type="button" class="c${r}">` + (s ? draw(I[s[0]] + (s[1] ? `|t:k ${s[1] > 999 ? 0 : 3} 15 7 ${s[1]}` : '')) : `<span class="num">${n}</span>`) + '</button>';
}
cells += ['3.2', '4.5', 25, 45, 65, 75, 125, 150, 250].map(t => `<button type="button" class="size">${t}</button>`).join('');
document.getElementById('palette').innerHTML = cells;
</script>
<script src="https://cdn.jsdelivr.net/npm/bootstrap@5.3.0/dist/js/bootstrap.bundle.min.js"></script>
</body>
</html>
